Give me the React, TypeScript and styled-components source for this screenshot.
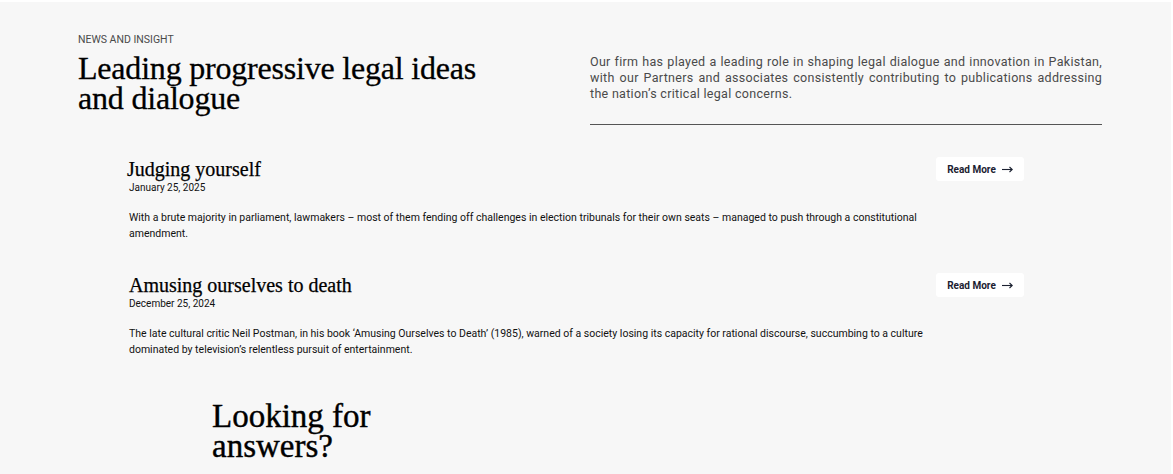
import React from "react";
import styled, { createGlobalStyle } from "styled-components";

const Global = createGlobalStyle`
  html, body { margin: 0; padding: 0; background: #ffffff; }
  body { font-family: Roboto, "Liberation Sans", sans-serif; }
  * { box-sizing: border-box; }
`;

const Page = styled.section`
  margin: 2px 2px 0 0;
  background: #f7f7f7;
  min-height: 472px;
  padding: 31px 71px 0 78px;
  overflow: hidden;
`;

const Intro = styled.header`
  display: grid;
  grid-template-columns: 512px 512px;
  justify-content: space-between;
`;

const Eyebrow = styled.div`
  font-family: Roboto, "Liberation Sans", sans-serif;
  font-size: 10.5px;
  line-height: 14px;
  color: #4a4a4a;
  text-transform: uppercase;
`;

const Headline = styled.h1`
  margin: 6px 0 0;
  font-family: "Liberation Serif", "Times New Roman", serif;
  font-weight: 400;
  font-size: 32px;
  line-height: 30px;
  color: #000;
  letter-spacing: -0.2px;
  -webkit-text-stroke: 0.3px #000;
`;

const IntroRight = styled.div`
  padding-top: 21px;
`;

const Lead = styled.p`
  margin: 0;
  font-family: Roboto, "Liberation Sans", sans-serif;
  font-size: 12.5px;
  line-height: 16px;
  letter-spacing: 0.3px;
  color: #4a4a4a;
  text-align: justify;
`;

const Rule = styled.hr`
  margin: 22px 0 0;
  border: 0;
  border-top: 1px solid #555;
`;

const Articles = styled.div`
  margin: 33px 0 0 49px;
  width: 897px;
  display: flex;
  flex-direction: column;
  gap: 32px;
`;

const Article = styled.article`
  display: grid;
  grid-template-columns: 1fr 88px;
  column-gap: 12px;
  align-items: start;
`;

const Body = styled.div`
  padding-left: 2px;
`;

const Title = styled.h2<{ $shift?: number }>`
  margin: 0 0 0 ${(p) => p.$shift ?? 0}px;
  font-family: "Liberation Serif", "Times New Roman", serif;
  font-weight: 400;
  font-size: 20px;
  line-height: 22px;
  color: #000;
  -webkit-text-stroke: 0.25px #000;
`;

const DateLine = styled.div`
  margin-top: 1px;
  font-family: Roboto, "Liberation Sans", sans-serif;
  font-size: 10px;
  line-height: 14px;
  color: #111;
`;

const Excerpt = styled.p`
  margin: 15px 0 0;
  font-family: Roboto, "Liberation Sans", sans-serif;
  font-size: 10.5px;
  line-height: 16px;
  color: #111;
`;

const ReadMore = styled.a`
  display: flex;
  align-items: center;
  justify-content: center;
  gap: 6px;
  height: 24px;
  background: #ffffff;
  border-radius: 3px;
  font-family: Roboto, "Liberation Sans", sans-serif;
  font-weight: 700;
  font-size: 10px;
  color: #1b2131;
  text-decoration: none;
  margin-top: -1px;
`;

const ArrowIcon = () => (
  <svg width="11" height="7" viewBox="0 0 11 7" fill="none" aria-hidden="true">
    <path d="M0 3.5H10" stroke="#1b2131" strokeWidth="1.1" />
    <path d="M7.5 1L10.2 3.5L7.5 6" stroke="#1b2131" strokeWidth="1.1" />
  </svg>
);

const Closing = styled.h2`
  margin: 43px 0 0 134px;
  font-family: "Liberation Serif", "Times New Roman", serif;
  font-weight: 400;
  font-size: 33px;
  line-height: 30px;
  color: #000;
  -webkit-text-stroke: 0.4px #000;
`;

const articles = [
  {
    title: "Judging yourself",
    date: "January 25, 2025",
    text:
      "With a brute majority in parliament, lawmakers – most of them fending off challenges in election tribunals for their own seats – managed to push through a constitutional amendment.",
    shift: -2,
  },
  {
    title: "Amusing ourselves to death",
    date: "December 25, 2024",
    text:
      "The late cultural critic Neil Postman, in his book ‘Amusing Ourselves to Death’ (1985), warned of a society losing its capacity for rational discourse, succumbing to a culture dominated by television’s relentless pursuit of entertainment.",
    shift: 0,
  },
];

export default function App() {
  return (
    <>
      <Global />
      <Page>
        <Intro>
          <div>
            <Eyebrow>News and Insight</Eyebrow>
            <Headline>
              Leading progressive legal ideas
              <br />
              and dialogue
            </Headline>
          </div>
          <IntroRight>
            <Lead>
              Our firm has played a leading role in shaping legal dialogue and innovation in Pakistan,
              with our Partners and associates consistently contributing to publications addressing
              the nation’s critical legal concerns.
            </Lead>
            <Rule />
          </IntroRight>
        </Intro>
        <Articles>
          {articles.map((a) => (
            <Article key={a.title}>
              <Body>
                <Title $shift={a.shift}>{a.title}</Title>
                <DateLine>{a.date}</DateLine>
                <Excerpt>{a.text}</Excerpt>
              </Body>
              <ReadMore href="#">
                Read More
                <ArrowIcon />
              </ReadMore>
            </Article>
          ))}
        </Articles>
        <Closing>
          Looking for
          <br />
          answers?
        </Closing>
      </Page>
    </>
  );
}
